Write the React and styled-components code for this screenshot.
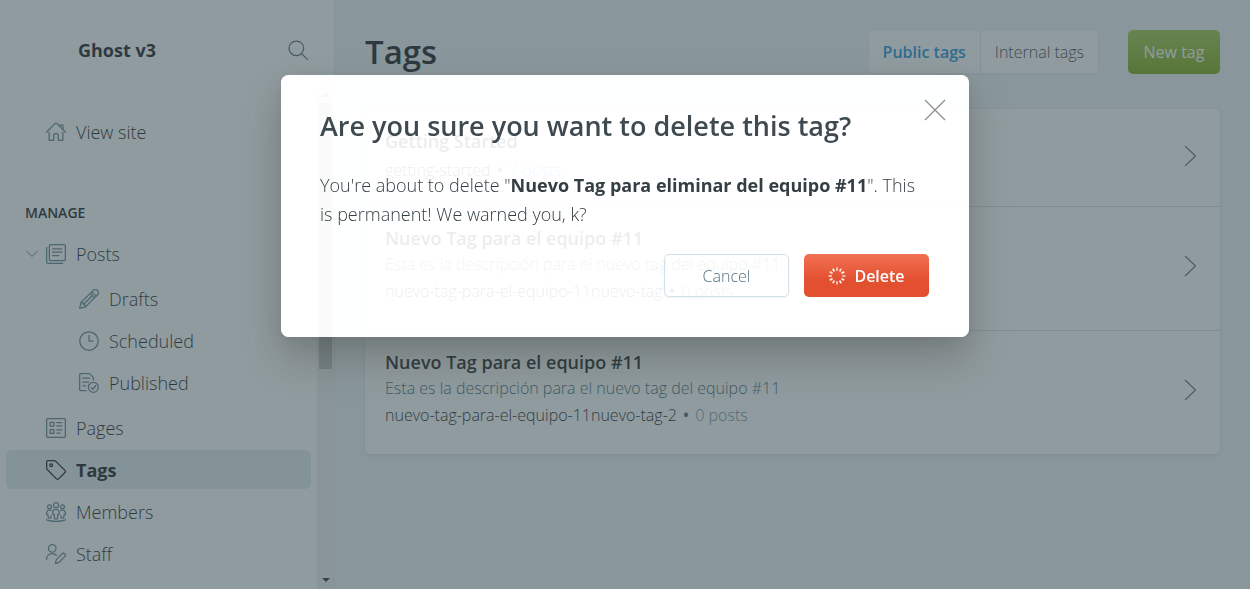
import React from "react";
import styled, { createGlobalStyle, css } from "styled-components";

const GlobalStyle = createGlobalStyle`
  *, *::before, *::after { box-sizing: border-box; }
  html, body { margin: 0; padding: 0; }
  body {
    background: #eff5f7;
    color: #15171a;
    font-family: "Open Sans", "Noto Sans", sans-serif;
    font-size: 16px;
    overflow: hidden;
  }
  a { color: inherit; text-decoration: none; }
  button { font-family: inherit; cursor: pointer; }
  h1, h2, h3, p, ul { margin: 0; padding: 0; font-weight: inherit; }
  ul { list-style: none; }
`;

const Layout = styled.div`
  display: flex;
  height: 100vh;
`;

const Sidebar = styled.aside`
  display: flex;
  flex-direction: column;
  flex: 0 0 335px;
  background: #fff;
  border-right: 1px solid #deebee;
`;

const SidebarHeader = styled.header`
  display: flex;
  flex: 0 0 86px;
  align-items: center;
  justify-content: space-between;
  padding: 30px 26px 16px 78px;
`;

const SiteName = styled.div`
  font-size: 18px;
  line-height: 38px;
  font-weight: 700;
`;

const SearchButton = styled.button`
  display: flex;
  padding: 0;
  border: 0;
  background: none;
  color: #54666d;
`;

const SidebarBody = styled.div`
  display: flex;
  flex: 1;
  min-height: 0;
`;

const Nav = styled.nav`
  flex: 1;
  padding: 26px 6px 0;
  overflow: hidden;
`;

const NavHeading = styled.h3`
  margin: 52px 0 11px;
  padding-left: 19px;
  font-size: 14px;
  line-height: 20px;
  font-weight: 600;
  text-transform: uppercase;
`;

const NavList = styled.ul`
  display: flex;
  flex-direction: column;
  gap: 3px;
  margin-top: ${(p) => (p.$nested ? "6px" : "0")};
  margin-bottom: ${(p) => (p.$nested ? "6px" : "0")};
`;

const NavItem = styled.a`
  display: flex;
  align-items: center;
  gap: 10px;
  height: 39px;
  padding-left: ${(p) => (p.$nested ? "73px" : p.$expandable ? "20px" : "40px")};
  border-radius: 6px;
  font-size: 18px;
  line-height: 24px;
  font-weight: 300;
  svg { color: #5f7f88; }
  ${(p) =>
    p.$active &&
    css`
      background: #dfebee;
      font-weight: 700;
      svg { color: #15171a; }
    `}
`;

const Caret = styled.span`
  display: flex;
  width: 12px;
  margin-right: -2px;
`;

const ScrollTrack = styled.div`
  display: flex;
  flex: 0 0 17px;
  flex-direction: column;
  align-items: center;
  gap: 6px;
  padding: 7px 2px;
  background: #f1f1f1;
`;

const ScrollThumb = styled.div`
  width: 100%;
  height: 266px;
  margin-bottom: auto;
  background: #c1c1c1;
`;

const Main = styled.main`
  flex: 1;
  min-width: 0;
  padding: 30px;
`;

const Toolbar = styled.header`
  display: flex;
  align-items: center;
  height: 44px;
  margin-bottom: 35px;
`;

const PageTitle = styled.h1`
  margin-right: auto;
  font-size: 33px;
  line-height: 44px;
  font-weight: 600;
`;

const Segmented = styled.div`
  display: flex;
  height: 42px;
  margin-right: 30px;
  border-radius: 5px;
  overflow: hidden;
  background: #fff;
  box-shadow: 0 1px 3px rgba(0, 0, 0, 0.06);
`;

const Segment = styled.button`
  padding: 0 14px;
  border: 0;
  background: #fff;
  color: ${(p) => (p.$active ? "#1490d8" : "#394047")};
  font-size: 16px;
  font-weight: ${(p) => (p.$active ? 600 : 300)};
  & + & { border-left: 1px solid #d6e8ec; }
`;

const NewTag = styled.a`
  display: flex;
  align-items: center;
  justify-content: center;
  width: 92px;
  height: 44px;
  border-radius: 5px;
  background: linear-gradient(#9cc844, #7ba60c);
  color: #fff;
  font-size: 16px;
`;

const TagList = styled.ul`
  background: #fff;
  border-radius: 5px;
  box-shadow: 0 1px 4px rgba(0, 40, 50, 0.12);
`;

const TagRow = styled.li`
  display: flex;
  align-items: center;
  justify-content: space-between;
  min-height: ${(p) => (p.$short ? "97px" : "124px")};
  padding: ${(p) => (p.$short ? "16px" : "13px")} 23px 19px 20px;
  & + & { border-top: 1px solid #d2e2e6; }
`;

const TagName = styled.h3`
  margin-bottom: ${(p) => (p.$spaced ? "3px" : "0")};
  font-size: 18px;
  line-height: 25px;
  font-weight: 600;
`;

const TagDescription = styled.p`
  color: #406572;
  font-size: 16px;
  line-height: 27px;
  font-weight: 300;
`;

const TagMeta = styled.p`
  font-size: 16px;
  line-height: 27px;
  font-weight: 300;
`;

const Count = styled.span`
  color: ${(p) => (p.$linked ? "#3eb0ef" : "#6f8d98")};
`;

const Dot = styled.span`
  margin: 0 2px;
  color: #406572;
  font-weight: 600;
`;

const ModalLayer = styled.div`
  position: fixed;
  inset: 0;
  display: flex;
  align-items: flex-start;
  justify-content: center;
  padding: 75px 20px 0;
`;

const Modal = styled.section`
  position: relative;
  width: 100%;
  max-width: 688px;
  padding: 32px 40px 40px 39px;
  border-radius: 8px;
  background: rgba(255, 255, 255, 0.92);
  box-shadow:
    0 22px 40px rgba(60, 60, 45, 0.3),
    0 4px 16px rgba(60, 70, 70, 0.12),
    0 0 0 100vmax rgba(63, 83, 89, 0.58);
`;

const ModalTitle = styled.h2`
  color: #3f4a50;
  font-size: 27px;
  line-height: 38px;
  font-weight: 600;
`;

const ModalText = styled.p`
  margin: 26px 0 25px;
  color: #343f44;
  font-size: 18px;
  line-height: 29px;
  font-weight: 300;
  strong { font-weight: 700; }
`;

const ModalActions = styled.footer`
  display: flex;
  justify-content: flex-end;
  gap: 15px;
`;

const ActionButton = styled.button`
  display: flex;
  align-items: center;
  justify-content: center;
  gap: 8px;
  width: 125px;
  height: 43px;
  padding: 0;
  border-radius: 5px;
  font-size: 16px;
  ${(p) =>
    p.$danger
      ? css`
          border: 0;
          background: linear-gradient(#f37153, #e25030 60%);
          color: #fff;
          font-weight: 600;
        `
      : css`
          border: 1px solid #d3e0e7;
          background: transparent;
          color: #54727e;
          font-weight: 300;
          box-shadow: 0 1px 2px rgba(0, 0, 0, 0.06);
        `}
`;

const CloseButton = styled.button`
  position: absolute;
  top: 24px;
  right: 23px;
  display: flex;
  padding: 0;
  border: 0;
  background: none;
  color: #8c8c8c;
`;

const Icon = ({ size = 20, box = 24, width = 1.5, children }) => (
  <svg
    width={size}
    height={size}
    viewBox={`0 0 ${box} ${box}`}
    fill="none"
    stroke="currentColor"
    strokeWidth={width}
    strokeLinecap="round"
    strokeLinejoin="round"
    aria-hidden="true"
  >
    {children}
  </svg>
);

const icons = {
  home: (
    <>
      <path d="M.8 12 10.7 2a1.8 1.8 0 0 1 2.6 0l9.9 10" />
      <path d="M3.7 12.5V22h5.5v-5.5a2.8 2.8 0 0 1 5.6 0V22h5.5v-9.5" />
      <path d="M16 3.7h4.3v5" />
    </>
  ),
  posts: (
    <>
      <rect x="4" y=".8" width="19.2" height="19.2" rx="1.5" />
      <path d="M.8 4v17.7c0 .8.7 1.5 1.5 1.5H20M8 5.8h11M8 9.8h11M8 13.8h7.5" />
    </>
  ),
  drafts: (
    <>
      <path d="m.8 23.2 1.7-7.1L17.2 1.6a3.2 3.2 0 0 1 4.5 0l.7.7a3.2 3.2 0 0 1 0 4.5L7.8 21.4Z" />
      <path d="m2.5 16.1 2.3.4.4 2.2 2.2.5.4 2.2M15.5 3.4l5.1 5.1M13.5 5.4l5.1 5.1M16 7.8 6 18" />
    </>
  ),
  clock: (
    <>
      <circle cx="12" cy="12" r="11.1" />
      <path d="M12 5.2V12h5" />
    </>
  ),
  published: (
    <>
      <path d="M8.5 21.2H2.3A1.5 1.5 0 0 1 .8 19.7V2.3A1.5 1.5 0 0 1 2.3.8h10.5l4.4 4.4v3.2M4.5 6.2h8M4.5 10.8h7M4.5 15.4H8" />
      <circle cx="17.2" cy="17.2" r="6" />
      <path d="m14.5 17.5 2 2 3.5-4.2" />
    </>
  ),
  pages: (
    <>
      <rect x=".8" y=".8" width="22.4" height="22.4" rx="1.5" />
      <path d="M5 5.2h4.5v4.5H5ZM5 14h4.5v4.5H5ZM13 5.5h6M13 9.3h6M13 14.3h6M13 18h4" />
    </>
  ),
  tag: (
    <>
      <path d="M.8 2.3v7.3a3 3 0 0 0 .9 2.1l10.9 10.9a1.8 1.8 0 0 0 2.5 0l7.6-7.6a1.8 1.8 0 0 0 0-2.5L11.8 1.7A3 3 0 0 0 9.7.8H2.3A1.5 1.5 0 0 0 .8 2.3Z" />
      <circle cx="6.2" cy="6.2" r="1.7" />
    </>
  ),
  members: (
    <>
      <circle cx="12" cy="3.8" r="3" />
      <circle cx="4.2" cy="5.8" r="2.3" />
      <circle cx="19.8" cy="5.8" r="2.3" />
      <path d="M15.8 12.5a3.8 3.8 0 0 0-7.6 0v2.3h1.5l.6 5.5h3.4l.6-5.5h1.5ZM6.3 10.3A3.4 3.4 0 0 0 .8 13v2.2h1.5l.5 3.8h3l.4-2.4M17.7 10.3a3.4 3.4 0 0 1 5.5 2.7v2.2h-1.5l-.5 3.8h-3l-.4-2.4" />
      <path d="M.8 21.4c5.5 2.4 16.9 2.4 22.4 0" />
    </>
  ),
  staff: (
    <>
      <circle cx="7.5" cy="5.3" r="4.5" />
      <path d="M.8 18.5a6.8 6.8 0 0 1 11.7-4.9" />
      <path d="m11.2 23.2 1.2-4.5 6.8-6.8a2.3 2.3 0 0 1 3.3 3.3L15.7 22Z" />
    </>
  ),
  search: (
    <>
      <circle cx="10" cy="10" r="8.8" />
      <path d="m16.3 16.3 6.9 6.9" />
    </>
  ),
};

const Spinner = () => (
  <svg width="18" height="18" viewBox="0 0 18 18" stroke="#fff" strokeWidth="1.8" aria-hidden="true">
    {Array.from({ length: 12 }, (_, i) => (
      <path key={i} d="M9 .6v3.2" opacity={0.7 + (i % 3) * 0.1} transform={`rotate(${i * 30} 9 9)`} />
    ))}
  </svg>
);

const contentLinks = [
  { icon: "pages", label: "Pages" },
  { icon: "tag", label: "Tags", active: true },
  { icon: "members", label: "Members" },
  { icon: "staff", label: "Staff" },
];

const postLinks = [
  { icon: "drafts", label: "Drafts" },
  { icon: "clock", label: "Scheduled" },
  { icon: "published", label: "Published" },
];

const tags = [
  { name: "Getting Started", slug: "getting-started", count: "7 posts", linked: true },
  {
    name: "Nuevo Tag para el equipo #11",
    description: "Esta es la descripción para el nuevo tag del equipo #11",
    slug: "nuevo-tag-para-el-equipo-11nuevo-tag",
    count: "0 posts",
  },
  {
    name: "Nuevo Tag para el equipo #11",
    description: "Esta es la descripción para el nuevo tag del equipo #11",
    slug: "nuevo-tag-para-el-equipo-11nuevo-tag-2",
    count: "0 posts",
  },
];

const NavEntry = ({ item, nested }) => (
  <li>
    <NavItem href="#" $nested={nested} $active={item.active} aria-current={item.active ? "page" : undefined}>
      <Icon>{icons[item.icon]}</Icon>
      {item.label}
    </NavItem>
  </li>
);

export default function App() {
  return (
    <>
      <GlobalStyle />
      <Layout>
        <Sidebar>
          <SidebarHeader>
            <SiteName>Ghost v3</SiteName>
            <SearchButton aria-label="Search">
              <Icon>{icons.search}</Icon>
            </SearchButton>
          </SidebarHeader>
          <SidebarBody>
            <Nav>
              <NavItem href="#">
                <Icon>{icons.home}</Icon>
                View site
              </NavItem>
              <NavHeading>Manage</NavHeading>
              <NavItem href="#" $expandable>
                <Caret>
                  <svg width="12" height="8" viewBox="0 0 12 8" fill="none" stroke="currentColor" aria-hidden="true">
                    <path d="m.7 1.2 5.3 5.3 5.3-5.3" />
                  </svg>
                </Caret>
                <Icon>{icons.posts}</Icon>
                Posts
              </NavItem>
              <NavList $nested>
                {postLinks.map((item) => (
                  <NavEntry key={item.label} item={item} nested />
                ))}
              </NavList>
              <NavList>
                {contentLinks.map((item) => (
                  <NavEntry key={item.label} item={item} />
                ))}
              </NavList>
            </Nav>
            <ScrollTrack aria-hidden="true">
              <svg width="8" height="4" viewBox="0 0 8 4">
                <path d="M0 4 4 0l4 4Z" fill="#a3a3a3" />
              </svg>
              <ScrollThumb />
              <svg width="8" height="4" viewBox="0 0 8 4">
                <path d="m0 0 4 4 4-4Z" fill="#303030" />
              </svg>
            </ScrollTrack>
          </SidebarBody>
        </Sidebar>

        <Main>
          <Toolbar>
            <PageTitle>Tags</PageTitle>
            <Segmented>
              <Segment type="button" $active>Public tags</Segment>
              <Segment type="button">Internal tags</Segment>
            </Segmented>
            <NewTag href="#">New tag</NewTag>
          </Toolbar>
          <TagList>
            {tags.map((tag) => (
              <TagRow key={tag.slug} $short={!tag.description}>
                <div>
                  <TagName $spaced={!tag.description}>{tag.name}</TagName>
                  {tag.description && <TagDescription>{tag.description}</TagDescription>}
                  <TagMeta>
                    {tag.slug} <Dot>•</Dot> <Count $linked={tag.linked}>{tag.count}</Count>
                  </TagMeta>
                </div>
                <svg width="13" height="22" viewBox="0 0 13 22" fill="none" stroke="#54727e" strokeWidth="1.2" aria-hidden="true">
                  <path d="m1 1 10.5 10L1 21" />
                </svg>
              </TagRow>
            ))}
          </TagList>
        </Main>
      </Layout>

      <ModalLayer>
        <Modal role="dialog" aria-modal="true" aria-labelledby="delete-tag-title">
          <ModalTitle id="delete-tag-title">Are you sure you want to delete this tag?</ModalTitle>
          <CloseButton type="button" aria-label="Close">
            <svg width="22" height="22" viewBox="0 0 22 22" stroke="currentColor" strokeWidth="1.2" aria-hidden="true">
              <path d="m1 1 20 20M21 1 1 21" />
            </svg>
          </CloseButton>
          <ModalText>
            You're about to delete "<strong>Nuevo Tag para eliminar del equipo #11</strong>". This is permanent! We
            warned you, k?
          </ModalText>
          <ModalActions>
            <ActionButton type="button">Cancel</ActionButton>
            <ActionButton type="button" $danger>
              <Spinner />
              Delete
            </ActionButton>
          </ModalActions>
        </Modal>
      </ModalLayer>
    </>
  );
}
